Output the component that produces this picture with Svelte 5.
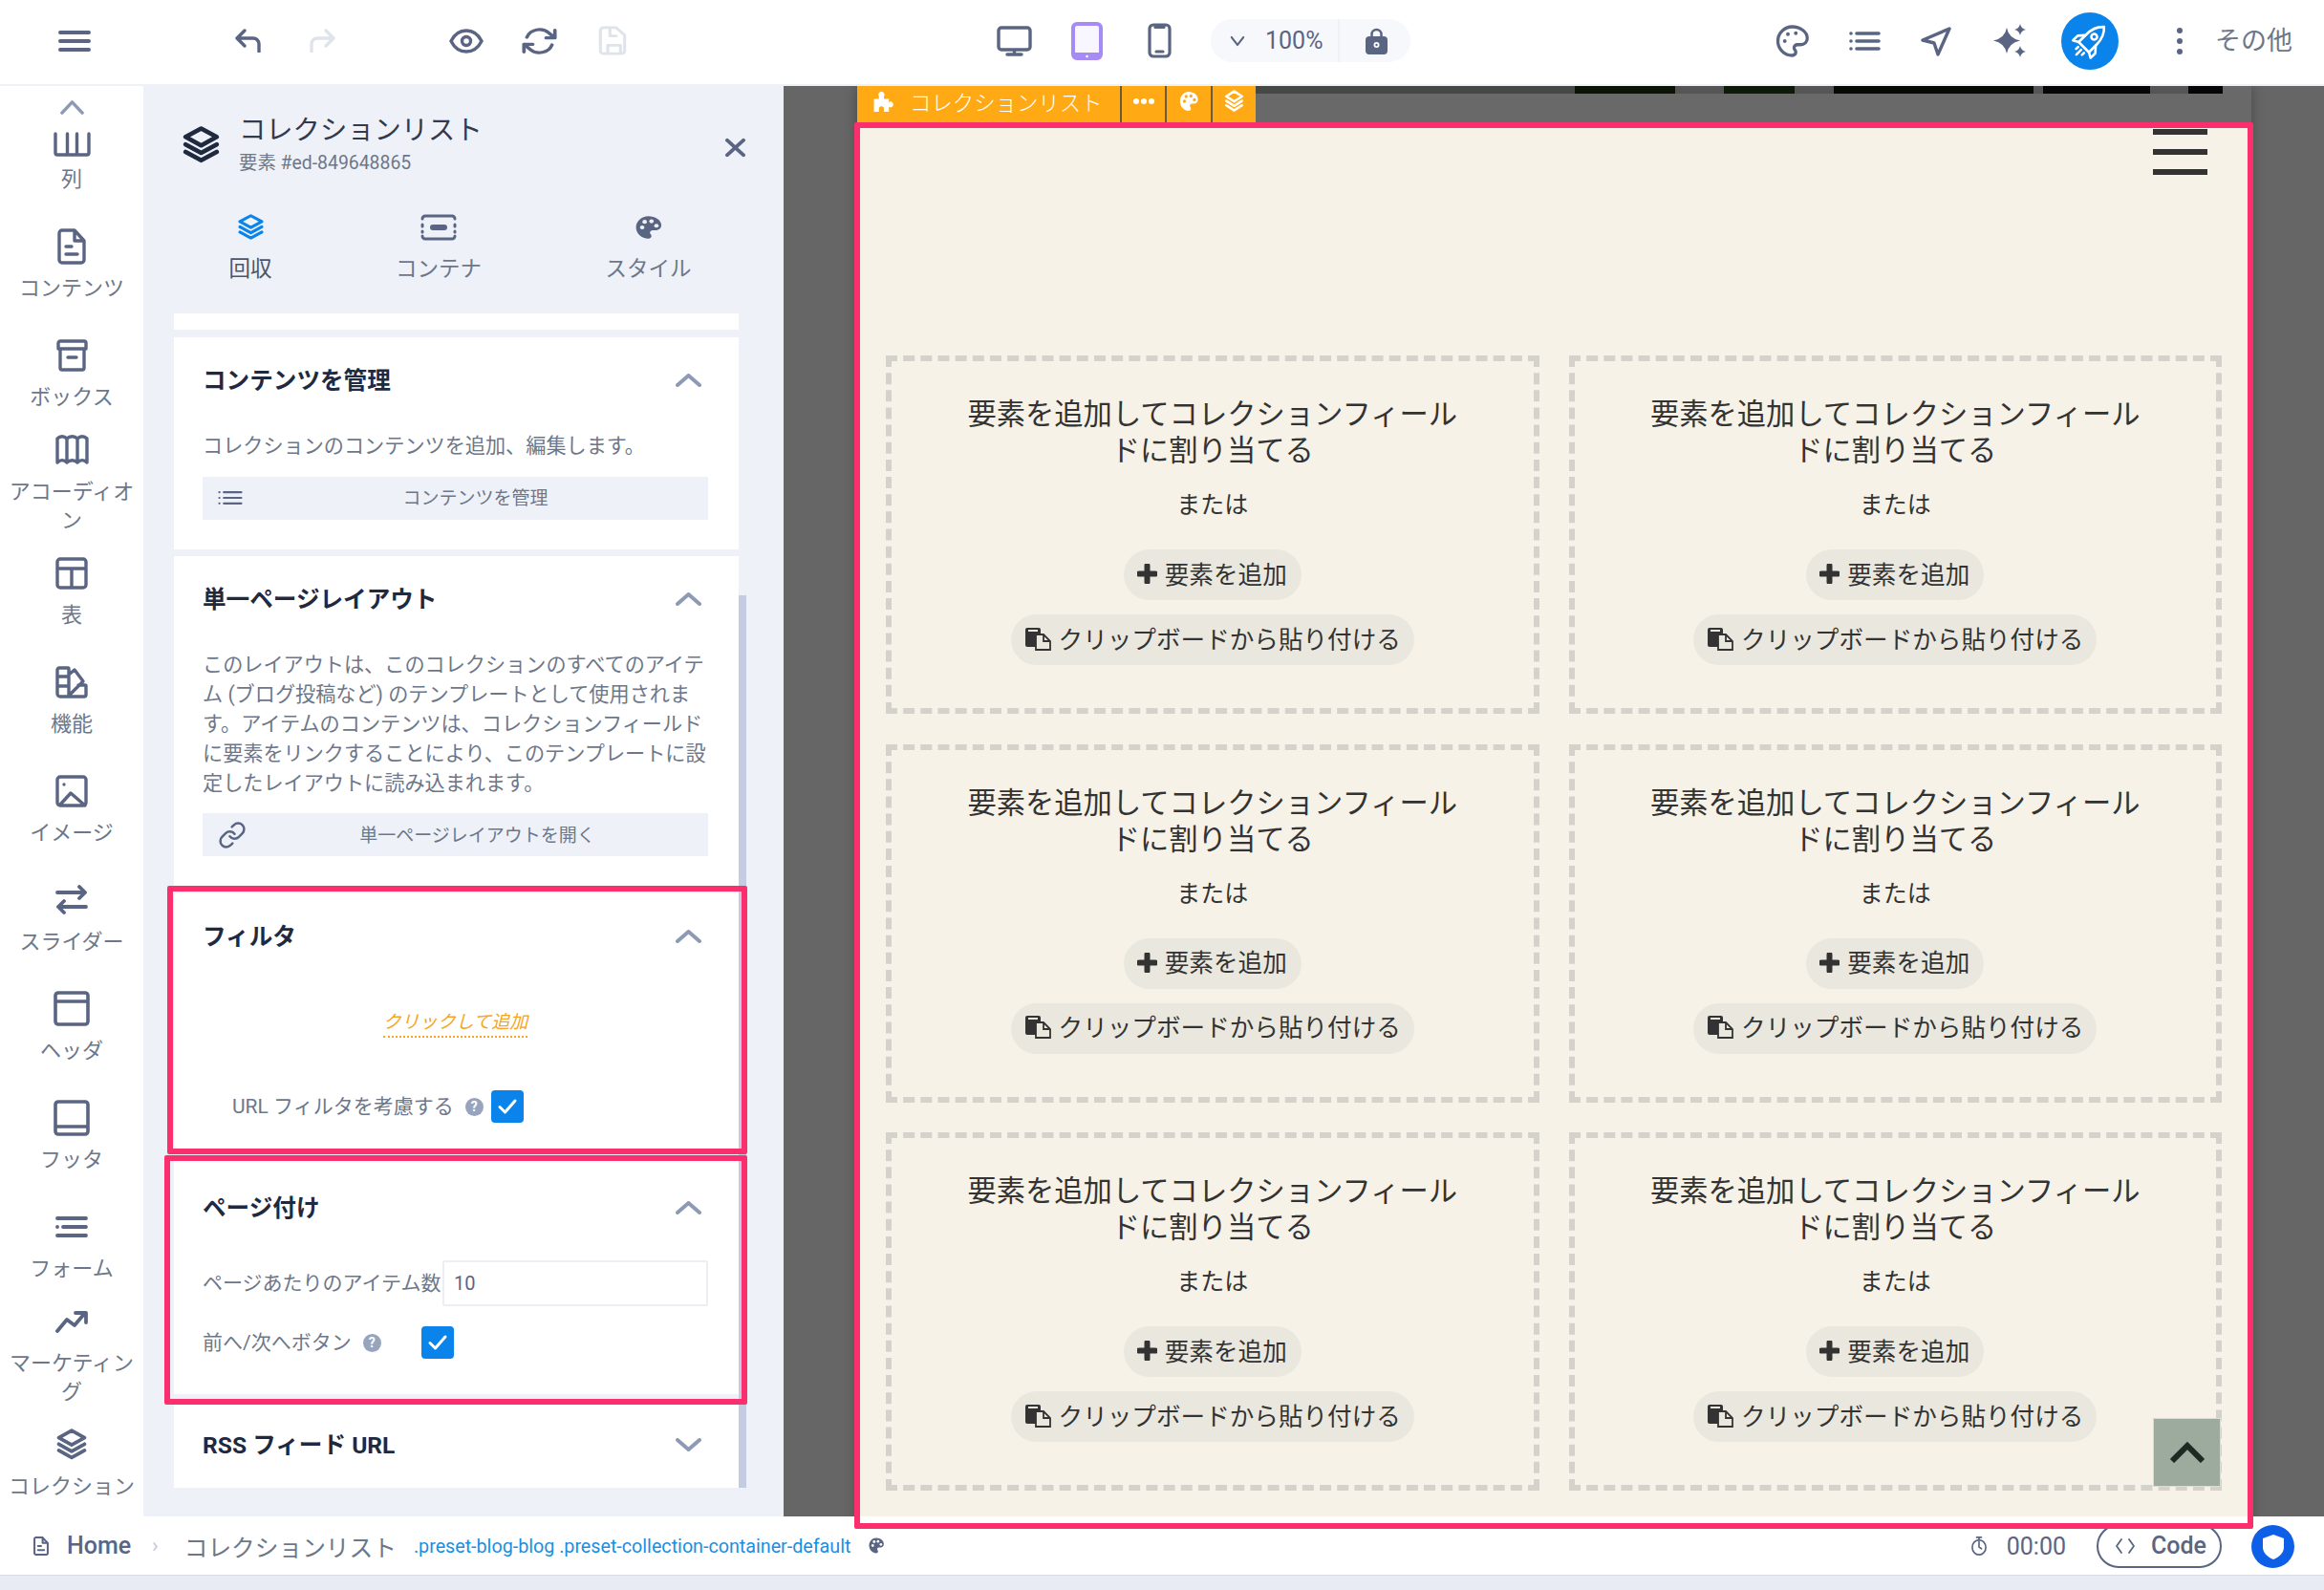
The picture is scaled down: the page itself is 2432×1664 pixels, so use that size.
<script>
  const LAYERS = "M12 1.500 2.500 6.800 12 12.100l9.500-5.300z M2.500 11.500 12 16.800l9.500-5.300 M2.500 16.200 12 21.500l9.500-5.300";
  const PALETTE_D =
    "M12 2C6.5 2 2 6.5 2 12s4.5 10 10 10c1.7 0 2.5-1.2 2.5-2.3 0-.6-.2-1-.6-1.5-.4-.4-.6-.9-.6-1.5 0-1.2 1-2.2 2.2-2.2h2.3c2.8 0 4.7-2 4.7-4.5C22.500 5.600 17.500 2 12 2z";

  const railItems = [
    { label: "列", w: 39, h: 26, vb: "0 0 39 26", sw: 3.4, low: true, d: "M2 2v20a2 2 0 0 0 2 2h31a2 2 0 0 0 2-2V2 M14.500 2v22 M24.500 2v22" },
    { label: "コンテンツ", w: 30, h: 38, vb: "0 0 30 38", sw: 3.4, d: "M5 2h13l10 11v20a3 3 0 0 1-3 3H5a3 3 0 0 1-3-3V5a3 3 0 0 1 3-3z M18 2v11h10 M9 19h6 M9 27h12" },
    { label: "ボックス", w: 33, h: 34, vb: "0 0 33 34", sw: 3.4, d: "M4 2h25a2 2 0 0 1 2 2v6H2V4a2 2 0 0 1 2-2z M4 10v20a2 2 0 0 0 2 2h21a2 2 0 0 0 2-2V10 M12 19h9" },
    { label: "アコーディオン", w: 35, h: 31, vb: "0 0 35 31", sw: 3.4, wrap: true, d: "M2 4c3-3 7-3 10 0v25c-3-3-7-3-10 0z M12 4c3-3 8-3 11 0v25c-3-3-8-3-11 0z M23 4c3-3 7-3 10 0v25c-3-3-7-3-10 0z" },
    { label: "表", w: 34, h: 34, vb: "0 0 34 34", sw: 3.4, d: "M5 2h24a3 3 0 0 1 3 3v24a3 3 0 0 1-3 3H5a3 3 0 0 1-3-3V5a3 3 0 0 1 3-3z M2 12h30 M17 12v20" },
    { label: "機能", w: 34, h: 34, vb: "0 0 34 34", sw: 3.4, d: "M4 2h9a1 1 0 0 1 1 1v27a2 2 0 0 1-2 2H5a3 3 0 0 1-3-3V4a2 2 0 0 1 2-2z M2 11h12 M2 21h12 M14 9l6-5 9 12-15 15 M14 32h16a2 2 0 0 0 2-2v-9a1 1 0 0 0-1-1h-7" },
    { label: "イメージ", w: 34, h: 34, vb: "0 0 34 34", sw: 3.4, d: "M5 2h24a3 3 0 0 1 3 3v24a3 3 0 0 1-3 3H5a3 3 0 0 1-3-3V5a3 3 0 0 1 3-3z M5 31l11-12 15 13 M9 10h.01" },
    { label: "スライダー", w: 34, h: 31, vb: "0 0 34 31", sw: 3.8, d: "M2 8h29 M25 2l6 6-6 6 M32 23H3 M9 17l-6 6 6 6" },
    { label: "ヘッダ", w: 38, h: 37, vb: "0 0 38 37", sw: 3.6, d: "M5 2h28a3 3 0 0 1 3 3v27a3 3 0 0 1-3 3H5a3 3 0 0 1-3-3V5a3 3 0 0 1 3-3z M2 11h34" },
    { label: "フッタ", w: 38, h: 38, vb: "0 0 38 38", sw: 3.6, d: "M5 2h28a3 3 0 0 1 3 3v28a3 3 0 0 1-3 3H5a3 3 0 0 1-3-3V5a3 3 0 0 1 3-3z M2 28h34" },
    { label: "フォーム", w: 34, h: 24, vb: "0 0 34 24", sw: 3.8, d: "M2 3h30 M8 12h24 M2 21h30 M2 12h.01" },
    { label: "マーケティング", w: 34, h: 24, vb: "0 0 34 24", sw: 3.8, wrap: true, d: "M2 22l10-12 8 6L31 3 M21 3h11v10" },
    { label: "コレクション", w: 34, h: 34, vb: "0 0 24 24", sw: 2.600, d: LAYERS },
  ];

  const cards = [1, 2, 3, 4, 5, 6];
</script>

{#snippet ico(d, w, h, vb = "0 0 24 24", sw = 2, cls = "")}
  <svg class="ico {cls}" width={w} height={h} viewBox={vb} preserveAspectRatio="none" stroke-width={sw} fill="none" stroke-linecap="round" stroke-linejoin="round">
    <path {d} />
  </svg>
{/snippet}

{#snippet paletteSolid(w, h, cls = "")}
  <svg class="solid {cls}" width={w} height={h} viewBox="0 0 24 24" preserveAspectRatio="none">
    <path d={PALETTE_D} />
    <circle class="hole" cx="7" cy="12" r="1.800" />
    <circle class="hole" cx="9" cy="7" r="1.800" />
    <circle class="hole" cx="14.500" cy="6.500" r="1.800" />
    <circle class="hole" cx="18.500" cy="10.500" r="1.800" />
  </svg>
{/snippet}

{#snippet help()}
  <span class="help">?</span>
{/snippet}

{#snippet check()}
  <span class="checkbox">
    {@render ico("M9 17.500 14.500 23 25 11", 34, 34, "0 0 34 34", 3, "white")}
  </span>
{/snippet}

{#snippet chevron(d = "M2 12 13.500 2 25 12")}
  {@render ico(d, 27, 14, "0 0 27 14", 4, "chev")}
{/snippet}

<div class="app">
  <header class="topbar">
    {@render ico("M2 3h30M2 12h30M2 21h30", 34, 24, "0 0 34 24", 4, "ml61")}
    {@render ico("M10 2 2 10l8 8 M2 10h17a6 6 0 0 1 6 6v8", 27, 25, "0 0 27 25", 3.400, "ml151")}
    {@render ico("M17 2l8 8-8 8 M25 10H8a6 6 0 0 0-6 6v8", 27, 25, "0 0 27 25", 3.400, "ml51 faint")}
    <svg class="ico ml119" width="36" height="26" viewBox="0 0 36 26" fill="none" stroke-width="3.400">
      <path d="M2 13C6 5 12 2 18 2s12 3 16 11c-4 8-10 11-16 11S6 21 2 13z" />
      <circle cx="18" cy="13" r="4.500" />
    </svg>
    {@render ico("M22.500 3.500v6h-6M1.500 20.500v-6h6M3.500 9a9 9 0 0 1 14.900-3.400L22.500 9.500M1.500 14.500l4.100 3.900A9 9 0 0 0 20.500 15", 37, 32, "0 0 24 24", 2.400, "ml40")}
    {@render ico("M6 2h12l8 8v17a3 3 0 0 1-3 3H6a3 3 0 0 1-3-3V5a3 3 0 0 1 3-3z M12 2v9h6 M10 30v-9h12v9", 32, 31, "0 0 29 32", 2.800, "ml42 faint")}

    {@render ico("M5 2h27a3 3 0 0 1 3 3v17a3 3 0 0 1-3 3H5a3 3 0 0 1-3-3V5a3 3 0 0 1 3-3z M18.500 25v5 M11 30h15", 37, 32, "0 0 37 32", 3.400, "ml386")}
    <svg class="ml41" width="33" height="40" viewBox="0 0 33 40">
      <rect x="2" y="2" width="29" height="36" rx="4" class="tablet" />
      <rect x="2" y="32" width="29" height="6" class="tablet-base" />
      <circle cx="16.500" cy="36" r="1.300" fill="#fff" />
    </svg>
    {@render ico("M6 2h13a4 4 0 0 1 4 4v25a4 4 0 0 1-4 4H6a4 4 0 0 1-4-4V6a4 4 0 0 1 4-4z M8 2.500h9v2H8z M9 30h7", 25, 37, "0 0 25 37", 3.200, "ml47")}

    <div class="zoom-pill">
      {@render ico("M2 2l7 8 7-8", 16, 12, "0 0 18 12", 2.200)}
      <span class="zoom-val">100%</span>
      <span class="zoom-div"></span>
      <svg class="solid" width="23" height="28" viewBox="0 0 23 28">
        <path class="shackle" d="M6.500 12V7a5 5 0 0 1 10 0v5" />
        <rect y="9" width="23" height="19" rx="4" />
        <circle class="hole" cx="11.500" cy="18" r="3" />
        <circle cx="11.500" cy="18" r="1.200" />
      </svg>
    </div>

    <svg class="ico ml381" width="37" height="36" viewBox="0 0 24 24" fill="none" stroke-width="2.200">
      <path d={PALETTE_D} />
      <circle class="dotf" cx="6.800" cy="12" r="1.300" />
      <circle class="dotf" cx="9" cy="7.200" r="1.300" />
      <circle class="dotf" cx="14.500" cy="6.500" r="1.300" />
    </svg>
    {@render ico("M8 3h23M8 11h23M8 19h23M2 3h.01M2 11h.01M2 19h.01", 33, 22, "0 0 33 22", 3.600, "ml41")}
    {@render ico("M31 3 3 15l12 3 4 12z", 33, 32, "0 0 33 32", 3.400, "ml41")}
    <svg class="solid ml43" width="36" height="35" viewBox="0 0 36 35">
      <path d="M15 4Q17 15 29 17.500Q17 20 15 31Q13 20 1 17.500Q13 15 15 4Z" />
      <path d="M29 0Q30 5 35 6Q30 7 29 12Q28 7 23 6Q28 5 29 0Z" />
      <path d="M29 23Q30 28 35 29Q30 30 29 35Q28 30 23 29Q28 28 29 23Z" />
    </svg>
    <span class="rocket">
      <svg width="48" height="48" viewBox="0 0 24 24" fill="none" stroke="#fff" stroke-width="1.300" stroke-linecap="round" stroke-linejoin="round">
        <g transform="rotate(45 12 12)">
          <path d="M12 1.500c2.800 2.500 3.800 5.500 3.800 9.500v5.500H8.200V11c0-4 1-7 3.800-9.500z" />
          <circle cx="12" cy="8.800" r="1.500" />
          <path d="M8.200 11.500 5.500 14.500v3.500l2.700-1.500 M15.800 11.500l2.700 3V18l-2.700-1.500 M9.800 18.500v1.500 M12 18.500v3.500 M14.200 18.500V20" />
        </g>
      </svg>
    </span>
    <span class="kebab"><i></i><i></i><i></i></span>
    <span class="more">その他</span>
  </header>

  <div class="main">
    <nav class="rail">
      {@render ico("M2 14 13 2l11 12", 25, 15, "0 0 26 16", 3.600, "chev")}
      <div class="rail-list">
        {#each railItems as item}
          <div class="rail-item" class:wrap={item.wrap}>
            <div class="rail-ico" class:low={item.low}>
              {@render ico(item.d, item.w, item.h, item.vb, item.sw)}
            </div>
            <span class="rail-label">{item.label}</span>
          </div>
        {/each}
      </div>
    </nav>

    <aside class="panel">
      <div class="panel-head">
        {@render ico(LAYERS, 41, 40, "0 0 24 24", 2.800, "dark")}
        <div class="head-text">
          <div class="head-title">コレクションリスト</div>
          <div class="head-sub">要素 #ed-849648865</div>
        </div>
        {@render ico("M3 3l17 17M20 3 3 20", 23, 21, "0 0 23 23", 4, "close")}
      </div>

      <div class="tabs">
        <div class="tab">
          {@render ico(LAYERS, 29, 28, "0 0 24 24", 2.600, "blue")}
          <span class="active">回収</span>
        </div>
        <div class="tab">
          <svg class="ico" width="38" height="28" viewBox="0 0 38 28" fill="none" stroke-width="3" stroke-linecap="round">
            <path d="M5 2h28a3 3 0 0 1 3 3 M2 5a3 3 0 0 1 3-3 M2 11v2 M2 18v1 M36 11v2 M36 18v1 M2 23a3 3 0 0 0 3 3h28a3 3 0 0 0 3-3" />
            <path d="M13 14h12" stroke-width="6" />
          </svg>
          <span>コンテナ</span>
        </div>
        <div class="tab">
          {@render paletteSolid(31, 30, "panelbg")}
          <span>スタイル</span>
        </div>
      </div>

      <div class="stub"></div>

      <section class="card">
        <div class="card-head"><h3>コンテンツを管理</h3>{@render chevron()}</div>
        <p class="desc">コレクションのコンテンツを追加、編集します。</p>
        <div class="btn">
          {@render ico("M8 3h23M8 11h23M8 19h23M2 3h.01M2 11h.01M2 19h.01", 26, 16, "0 0 33 22", 3)}
          <span>コンテンツを管理</span>
        </div>
      </section>

      <section class="card">
        <div class="card-head"><h3>単一ページレイアウト</h3>{@render chevron()}</div>
        <p class="desc">
          このレイアウトは、このコレクションのすべてのアイテ<br />
          ム (ブログ投稿など) のテンプレートとして使用されま<br />
          す。アイテムのコンテンツは、コレクションフィールド<br />
          に要素をリンクすることにより、このテンプレートに設<br />
          定したレイアウトに読み込まれます。
        </p>
        <div class="btn">
          {@render ico("M10 13a5 5 0 0 0 7.540.540l3-3a5 5 0 0 0-7.070-7.070l-1.720 1.710 M14 11a5 5 0 0 0-7.540-.540l-3 3a5 5 0 0 0 7.070 7.070l1.710-1.710", 30, 30, "0 0 24 24", 2)}
          <span>単一ページレイアウトを開く</span>
        </div>
      </section>

      <section class="card filter">
        <div class="card-head"><h3>フィルタ</h3>{@render chevron()}</div>
        <div class="add-link"><span>クリックして追加</span></div>
        <div class="opt url-opt">
          <span>URL フィルタを考慮する</span>
          {@render help()}
          {@render check()}
        </div>
      </section>

      <section class="card pagination">
        <div class="card-head"><h3>ページ付け</h3>{@render chevron()}</div>
        <div class="opt per-page">
          <span class="per-label">ページあたりのアイテム数</span>
          <input type="text" value="10" />
        </div>
        <div class="opt nav-opt">
          <span>前へ/次へボタン</span>
          {@render help()}
          {@render check()}
        </div>
      </section>

      <section class="card rss">
        <div class="card-head"><h3>RSS フィード URL</h3>{@render chevron("M2 2 13.500 12 25 2")}</div>
      </section>

      <div class="scrollbar"></div>
    </aside>

    <main class="canvas">
      <div class="device">
        <div class="strip"></div>
        <div class="page">
          <div class="page-head">
            <span class="burger"><i></i><i></i><i></i></span>
          </div>
          <div class="grid">
            {#each cards as c (c)}
              <div class="slot">
                <div class="slot-title">要素を追加してコレクションフィール<br />ドに割り当てる</div>
                <div class="slot-or">または</div>
                <div class="pill add">
                  <svg class="plus" width="21" height="21" viewBox="0 0 21 21"><path d="M10.500 2v17M2 10.500h17" /></svg>
                  要素を追加
                </div>
                <div class="pill paste">
                  <svg width="27" height="24" viewBox="0 0 27 24">
                    <path class="clip-back" d="M2 0h12a2 2 0 0 1 2 2v18H2a2 2 0 0 1-2-2V2a2 2 0 0 1 2-2z" />
                    <path class="clip-bar" d="M3 3h10" />
                    <path class="clip-doc" d="M11 7h8l7 7v9H11z M19 7v7h7" />
                  </svg>
                  クリップボードから貼り付ける
                </div>
              </div>
            {/each}
          </div>
        </div>
      </div>

      <div class="el-toolbar">
        <div class="el-name">
          <svg width="26" height="24" viewBox="0 0 24 23" fill="#fff">
            <path d="M2 9h5V6.500a3 3 0 1 1 5 0V9h5v3.500a2.800 2.800 0 1 1 0 4.500V22h-5v-3a2.500 2.500 0 0 0-5 0v3H2z" />
          </svg>
          <span>コレクションリスト</span>
        </div>
        <div class="el-btn"><span class="el-dots"><i></i><i></i><i></i></span></div>
        <div class="el-btn">{@render paletteSolid(22, 24, "orangebg")}</div>
        <div class="el-btn">{@render ico(LAYERS, 21, 24, "0 0 24 24", 2.600, "white")}</div>
      </div>

      <button class="to-top" aria-label="上へ">
        <svg width="38" height="22" viewBox="0 0 38 22" fill="none"><path d="M3 20 19 4l16 16" /></svg>
      </button>
    </main>
  </div>

  <footer class="bottombar">
    {@render ico("M5 2h13l10 11v20a3 3 0 0 1-3 3H5a3 3 0 0 1-3-3V5a3 3 0 0 1 3-3z M18 2v11h10 M9 19h6 M9 27h12", 16, 20, "0 0 30 38", 3.800, "ml35")}
    <span class="crumb-home">Home</span>
    <span class="crumb-sep">›</span>
    <span class="crumb-name">コレクションリスト</span>
    <span class="crumb-class">.preset-blog-blog .preset-collection-container-default</span>
    {@render paletteSolid(18, 19, "plain ml18")}
    <span class="spacer"></span>
    {@render ico("M12 7v6l3 2 M12 2v3 M9 2h6 M12 5a8.500 8.500 0 1 0 0 17 8.500 8.500 0 0 0 0-17z", 20, 22, "0 0 24 24", 2)}
    <span class="timer">00:00</span>
    <span class="code-btn">
      {@render ico("M6 1 1 8l5 7 M14 1l5 7-5 7", 20, 16, "0 0 20 16", 1.800)}
      Code
    </span>
    <span class="shield">
      <svg width="24" height="28" viewBox="0 0 24 28" fill="#fff"><path d="M12 1 23 5v9c0 6-4.500 10.500-11 13C5.500 24.500 1 20 1 14V5z" /></svg>
    </span>
  </footer>

  <div class="mark mark-page"></div>
  <div class="mark mark-filter"></div>
  <div class="mark mark-pagination"></div>
</div>

<style>
  :global(body) {
    margin: 0;
    background: #fff;
  }

  .app {
    position: relative;
    width: 2432px;
    height: 1664px;
    overflow: hidden;
    display: flex;
    flex-direction: column;
    font-family: Roboto, "Noto Sans CJK JP", sans-serif;
    color: #6d7789;
  }

  .ico {
    stroke: #5a6583;
    flex: none;
  }
  .solid {
    fill: #5a6583;
    flex: none;
  }
  .hole {
    fill: #fff;
  }
  .dotf {
    fill: #5a6583;
    stroke: none;
  }
  .faint {
    stroke: #dfe3ea;
  }
  .dark {
    stroke: #1f2940;
  }
  .blue {
    stroke: #0a84ea;
  }
  .white {
    stroke: #fff;
  }
  .chev {
    stroke: #8e9ab5;
  }
  .close {
    margin-left: auto;
    margin-top: 28px;
  }
  .panelbg .hole {
    fill: #eef2f8;
  }
  .orangebg {
    fill: #fff;
  }
  .orangebg .hole {
    fill: #ffa914;
  }

  .ml18 { margin-left: 18px; }
  .ml35 { margin-left: 35px; }
  .ml40 { margin-left: 40px; }
  .ml41 { margin-left: 41px; }
  .ml42 { margin-left: 42px; }
  .ml43 { margin-left: 43px; }
  .ml47 { margin-left: 47px; }
  .ml51 { margin-left: 51px; }
  .ml61 { margin-left: 61px; }
  .ml119 { margin-left: 119px; }
  .ml151 { margin-left: 151px; }
  .ml381 { margin-left: 381px; }
  .ml386 { margin-left: 386px; }

  /* top bar */
  .topbar {
    flex: none;
    height: 85px;
    padding-bottom: 3px;
    background: #fff;
    border-bottom: 2px solid #eef1f5;
    display: flex;
    align-items: center;
  }
  .tablet {
    fill: #f8f6ff;
    stroke: #a78bf5;
    stroke-width: 4;
  }
  .tablet-base {
    fill: #a78bf5;
  }
  .zoom-pill {
    width: 209px;
    height: 45px;
    margin-left: 41px;
    padding-left: 20px;
    box-sizing: border-box;
    border-radius: 23px;
    background: #f7f8fb;
    display: flex;
    align-items: center;
  }
  .zoom-val {
    margin-left: 21px;
    width: 60px;
    font-size: 25px;
    line-height: 30px;
    color: #5a6583;
  }
  .zoom-div {
    width: 2px;
    height: 45px;
    background: #f0f1f5;
    margin-left: 16px;
    margin-right: 27px;
  }
  .shackle {
    fill: none;
    stroke: #5a6583;
    stroke-width: 2.500;
  }
  .rocket {
    flex: none;
    width: 60px;
    height: 60px;
    margin-left: 36px;
    border-radius: 50%;
    background: #0a84ea;
    display: flex;
    align-items: center;
    justify-content: center;
  }
  .kebab {
    margin-left: 61px;
    display: flex;
    flex-direction: column;
    gap: 5px;
  }
  .kebab i {
    display: block;
    width: 6px;
    height: 6px;
    border-radius: 50%;
    background: #5a6583;
  }
  .more {
    margin-left: 34px;
    font-size: 27px;
    line-height: 34px;
    color: #6d7789;
  }

  .main {
    flex: none;
    height: 1497px;
    display: flex;
  }

  /* left rail */
  .rail {
    flex: none;
    width: 150px;
    height: 1497px;
    background: #fff;
    overflow: hidden;
    padding-top: 15px;
    box-sizing: border-box;
    display: flex;
    flex-direction: column;
    align-items: center;
  }
  .rail-list {
    margin-top: 3.500px;
    width: 100%;
  }
  .rail-item {
    height: 114px;
    display: flex;
    flex-direction: column;
    align-items: center;
  }
  .rail-item.wrap {
    height: 129px;
    margin-top: -15px;
  }
  .rail-ico {
    flex: none;
    height: 40px;
    display: flex;
    align-items: center;
  }
  .rail-ico.low {
    align-items: flex-end;
  }
  .rail-label {
    margin-top: 9px;
    width: 140px;
    text-align: center;
    font-size: 22px;
    line-height: 30px;
  }

  /* properties panel */
  .panel {
    position: relative;
    flex: none;
    width: 670px;
    box-sizing: border-box;
    padding: 26px 47px 0 32px;
    background: #eef2f8;
  }
  .panel-head {
    display: flex;
    margin-right: -8px;
    padding-left: 8px;
  }
  .panel-head > :first-child {
    margin-top: 16px;
  }
  .head-text {
    margin-left: 19px;
  }
  .head-title {
    padding-top: 1px;
    height: 39px;
    font-size: 28.300px;
    line-height: 40px;
    color: #333a4d;
  }
  .head-sub {
    font-size: 19.400px;
    line-height: 30px;
  }
  .tabs {
    display: grid;
    grid-template-columns: 160px 234px 205px;
    margin: 38px -8px 32px 0;
  }
  .tab {
    display: flex;
    flex-direction: column;
    align-items: center;
    font-size: 22.500px;
    line-height: 30px;
  }
  .tab svg {
    height: 28px;
    margin-bottom: 14px;
  }
  .tab .active {
    color: #4b556c;
  }
  .stub {
    height: 17px;
    margin-bottom: 8px;
    background: #fff;
  }
  .card {
    background: #fff;
    padding: 30px 32px 31px 30px;
    margin-bottom: 7px;
  }
  .card-head {
    height: 30px;
    display: flex;
    align-items: center;
    justify-content: space-between;
    padding-right: 7px;
  }
  h3 {
    margin: 0;
    padding-top: 2px;
    font-size: 24.600px;
    line-height: 30px;
    font-weight: 700;
    color: #1f2940;
  }
  .desc {
    margin: 38px 0 16.500px;
    font-size: 21.150px;
    line-height: 31px;
    white-space: nowrap;
  }
  .btn {
    height: 45px;
    box-sizing: border-box;
    display: flex;
    align-items: center;
    padding-left: 16px;
    background: #eef2f8;
    font-size: 19px;
  }
  .btn span {
    flex: 1;
    padding-bottom: 3px;
    text-align: center;
  }
  .filter {
    padding-top: 31px;
    padding-bottom: 33px;
  }
  .add-link {
    margin-top: 61px;
    margin-bottom: -1px;
    text-align: center;
    font-size: 19px;
    line-height: 28px;
    font-style: italic;
    color: #f5a623;
  }
  .add-link span {
    display: inline-block;
    border-bottom: 2px dotted #f5a623;
  }
  .opt {
    display: flex;
    align-items: center;
    font-size: 21px;
    line-height: 34px;
  }
  .url-opt {
    margin-top: 56px;
    padding-left: 31px;
  }
  .help {
    flex: none;
    width: 19px;
    height: 19px;
    margin-left: 12px;
    border-radius: 50%;
    background: #98a3bd;
    color: #fff;
    font-size: 14px;
    font-weight: 700;
    line-height: 19px;
    text-align: center;
  }
  .checkbox {
    flex: none;
    width: 34px;
    height: 34px;
    margin-left: 8px;
    border-radius: 4px;
    background: #0a84ea;
    display: flex;
  }
  .pagination {
    padding-top: 34px;
    padding-bottom: 37px;
  }
  .per-page {
    margin-top: 40px;
  }
  .per-label {
    flex: none;
    width: 251px;
    white-space: nowrap;
  }
  input {
    flex: 1;
    min-width: 0;
    height: 48px;
    box-sizing: border-box;
    padding: 0 10px;
    border: 2px solid #eceef3;
    border-radius: 2px;
    font: inherit;
    font-size: 20px;
    color: #5a6583;
    outline: none;
  }
  .nav-opt {
    margin-top: 21px;
  }
  .nav-opt .checkbox {
    margin-left: 42px;
  }
  .rss {
    margin-bottom: 0;
    padding-top: 31px;
    padding-bottom: 30px;
  }
  .scrollbar {
    position: absolute;
    left: 623px;
    top: 533px;
    width: 8px;
    height: 934px;
    background: #c3cce0;
  }

  /* canvas */
  .canvas {
    position: relative;
    flex: 1;
    min-width: 0;
    background: #666;
    overflow: hidden;
    padding-left: 77px;
  }
  .device {
    width: 1459px;
    height: 1600px;
    background: #696969;
    box-shadow: 0 0 12px rgba(0, 0, 0, 0.3);
  }
  .strip {
    height: 8px;
    margin-bottom: 30px;
    margin-right: 30px;
    background: linear-gradient(
      to right,
      #464846 0 751px,
      #0a1306 751px 856px,
      #555 856px 907px,
      #0c1a08 907px 981px,
      #555 981px 1022px,
      #060a04 1022px 1231px,
      #555 1231px 1241px,
      #050505 1241px 1353px,
      #555 1353px 1393px,
      #050505 1393px
    );
  }
  .page {
    width: 1455px;
    height: 1500px;
    background: #f6f2e8;
    color: #333;
  }
  .page-head {
    height: 244px;
    box-sizing: border-box;
    padding: 7px 42px 0 0;
    display: flex;
    justify-content: flex-end;
  }
  .burger {
    width: 57px;
    display: flex;
    flex-direction: column;
    gap: 15px;
  }
  .burger i {
    display: block;
    height: 6px;
    background: #333;
  }
  .grid {
    display: grid;
    grid-template-columns: 1fr 1fr;
    grid-auto-rows: 375px;
    gap: 31.500px 31px;
    padding: 0 27px 0 30px;
  }
  .slot {
    box-sizing: border-box;
    border: 6px dashed #d5d2cc;
    padding-top: 37px;
    display: flex;
    flex-direction: column;
    align-items: center;
    text-align: center;
  }
  .slot-title {
    font-size: 30.300px;
    line-height: 38px;
    white-space: nowrap;
  }
  .slot-or {
    margin-top: 19px;
    font-size: 25px;
    line-height: 38px;
  }
  .pill {
    box-sizing: border-box;
    height: 53px;
    border-radius: 27px;
    background: #eae8de;
    padding-bottom: 5px;
    display: flex;
    align-items: center;
    font-size: 25.600px;
    white-space: nowrap;
  }
  .pill svg {
    margin-top: 3px;
  }
  .add {
    margin-top: 27px;
    padding-left: 14px;
    padding-right: 15px;
    gap: 8px;
  }
  .paste {
    margin-top: 15px;
    padding-left: 15px;
    padding-right: 14px;
    gap: 8px;
  }
  .plus {
    fill: none;
    stroke: #333;
    stroke-width: 6;
    stroke-linecap: round;
  }
  .clip-back {
    fill: #333;
  }
  .clip-bar {
    stroke: #eae8de;
    stroke-width: 2;
  }
  .clip-doc {
    fill: #eae8de;
    stroke: #333;
    stroke-width: 1.800;
  }

  .el-toolbar {
    position: absolute;
    left: 77px;
    top: 0;
    height: 38px;
    box-sizing: border-box;
    display: flex;
    background: #ffa914;
    color: #fff;
  }
  .el-name {
    width: 275px;
    box-sizing: border-box;
    padding: 0 0 7px 15px;
    display: flex;
    align-items: center;
    gap: 14px;
    font-size: 22.400px;
    font-weight: 300;
  }
  .el-btn {
    width: 45.300px;
    padding-bottom: 6px;
    box-sizing: content-box;
    border-left: 2px solid #6a5a36;
    display: flex;
    align-items: center;
    justify-content: center;
  }
  .el-dots {
    display: flex;
    gap: 2px;
  }
  .el-dots i {
    width: 6px;
    height: 6px;
    border-radius: 50%;
    background: #fff;
  }
  .to-top {
    position: absolute;
    left: 1433px;
    top: 1394px;
    width: 71px;
    height: 72px;
    box-sizing: border-box;
    padding: 0;
    border: 1px solid #d9dcd2;
    background: #9daa9e;
    display: flex;
    align-items: center;
    justify-content: center;
  }
  .to-top path {
    stroke: #1c2b22;
    stroke-width: 6;
  }

  /* bottom bar */
  .bottombar {
    flex: none;
    height: 61px;
    box-sizing: content-box;
    background: #fff;
    border-bottom: 1px solid #d8dbe2;
    display: flex;
    align-items: center;
    color: #5a6583;
    box-shadow: 0 16px 0 #e8ebf3;
  }
  .crumb-home {
    margin-left: 19px;
    font-size: 25px;
    font-weight: 500;
  }
  .crumb-sep {
    margin-left: 22px;
    font-size: 22px;
    color: #c3c9d6;
  }
  .crumb-name {
    margin-left: 27px;
    font-size: 24.700px;
    color: #6d7789;
  }
  .crumb-class {
    margin-left: 18px;
    margin-top: 2px;
    font-size: 19.700px;
    color: #1a8fe3;
    white-space: nowrap;
  }
  .spacer {
    flex: 1;
  }
  .timer {
    margin-left: 19px;
    margin-top: 2px;
    font-size: 25px;
  }
  .code-btn {
    margin-left: 32px;
    width: 131px;
    height: 46px;
    box-sizing: border-box;
    padding-left: 18px;
    border: 2px solid #5a6583;
    border-radius: 23px;
    display: flex;
    align-items: center;
    gap: 17px;
    font-size: 25px;
    font-weight: 500;
  }
  .shield {
    margin: 2px 31px 0 31px;
    width: 45px;
    height: 45px;
    border-radius: 50%;
    background: #0d5fe8;
    display: flex;
    align-items: center;
    justify-content: center;
  }

  /* annotation rectangles over the screenshot */
  .mark {
    position: absolute;
    box-sizing: border-box;
    border: 6px solid #fb2f6d;
    border-radius: 2px;
    pointer-events: none;
  }
  .mark-page {
    left: 894px;
    top: 128px;
    width: 1464px;
    height: 1472px;
  }
  .mark-filter {
    left: 175px;
    top: 927px;
    width: 607px;
    height: 281px;
  }
  .mark-pagination {
    left: 172px;
    top: 1209px;
    width: 610px;
    height: 261px;
  }
</style>
